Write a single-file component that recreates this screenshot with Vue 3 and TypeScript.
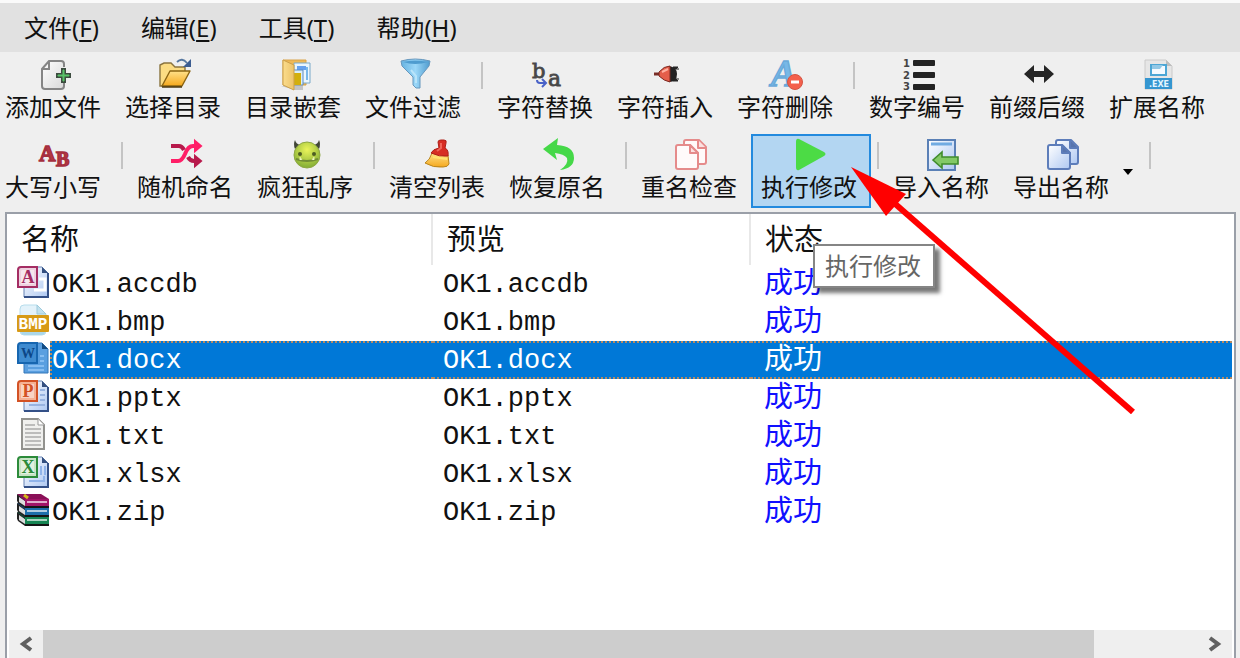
<script setup lang="ts">
import { ref } from 'vue'

interface Tool {
  kind: 'tool'
  icon: string
  label: string
  active?: boolean
  menu?: boolean
}
interface Separator {
  kind: 'sep'
}
interface FileRow {
  name: string
  preview: string
  status: string
  icon: string
}

const menus = [
  { text: '文件', key: 'F' },
  { text: '编辑', key: 'E' },
  { text: '工具', key: 'T' },
  { text: '帮助', key: 'H' },
]

const tool = (icon: string, label: string, extra: Partial<Tool> = {}): Tool => ({ kind: 'tool', icon, label, ...extra })
const sep: Separator = { kind: 'sep' }

const toolbars: (Tool | Separator)[][] = [
  [
    tool('add', '添加文件'),
    tool('open', '选择目录'),
    tool('nested', '目录嵌套'),
    tool('filter', '文件过滤'),
    sep,
    tool('replace', '字符替换'),
    tool('insert', '字符插入'),
    tool('remove', '字符删除'),
    sep,
    tool('number', '数字编号'),
    tool('affix', '前缀后缀'),
    tool('ext', '扩展名称'),
  ],
  [
    tool('letters', '大写小写'),
    sep,
    tool('shuffle', '随机命名'),
    tool('crazy', '疯狂乱序'),
    sep,
    tool('clear', '清空列表'),
    tool('undo', '恢复原名'),
    sep,
    tool('check', '重名检查'),
    tool('run', '执行修改', { active: true }),
    sep,
    tool('import', '导入名称'),
    tool('export', '导出名称', { menu: true }),
    sep,
  ],
]

const files: FileRow[] = [
  ['OK1.accdb', 'accdb'],
  ['OK1.bmp', 'bmp'],
  ['OK1.docx', 'docx'],
  ['OK1.pptx', 'pptx'],
  ['OK1.txt', 'txt'],
  ['OK1.xlsx', 'xlsx'],
  ['OK1.zip', 'zip'],
].map(([name, icon]) => ({ name, preview: name, status: '成功', icon }))

const selected = ref('OK1.docx')

const twoPages = (line: string, fill: string, fold: string) => `
  <g fill="${fill}" stroke="${line}" stroke-width="2" stroke-linejoin="round">
    <path d="M9 6V3Q9 1 11 1H24L31 8V23Q31 25 29 25H23"/>
    <path d="M23 1V9H31" fill="${fold}"/>
    <path d="M3 6H15L23 14V28Q23 30 21 30H3Q1 30 1 28V8Q1 6 3 6Z"/>
    <path d="M15 6V14H23Z" fill="${fold}"/>
  </g>`

const office = (letter: string, line: string, pale: string, extra: string) => `
  <path d="M7 1H25L31 7V31H7Z" fill="url(#paper)" stroke="#6683b5"/>
  <path d="M7 31H31V7" fill="none" stroke="#345087" stroke-width="2"/>
  <path d="M25 1V7H31Z" fill="#35507f"/>
  ${extra}
  <path d="M4 1H20V21H1V4Q1 1 4 1Z" fill="${pale}" stroke="${line}" stroke-width="2"/>
  <path d="M5 4H17V18H4V5Z" fill="#fff" fill-opacity=".45"/>
  <text x="11" y="17" text-anchor="middle" font-family="Liberation Serif, serif" font-weight="700" font-size="18" fill="${line}">${letter}</text>`

const book = (y: number, color: string, dark: string) => `
  <g transform="translate(0 ${y})">
    <path d="M0 0L8 5V14L1 9Q-1 5 0 0Z" fill="#222"/>
    <path d="M2 3L8 7V12L2 8Z" fill="#ddd"/>
    <path d="M0 0L24 0L32 5V7H8Z" fill="${dark}"/>
    <path d="M8 5H32V13H8Z" fill="${color}"/>
    <path d="M10 8H30" stroke="#fff" stroke-opacity=".65" stroke-width="2"/>
    <path d="M8 13H32" stroke="#151515" stroke-width="2"/>
  </g>`

const icons: Record<string, string> = {
  add: `
    <path d="M10 2H22Q25 2 25 5V27Q25 30 22 30H6Q3 30 3 27V10Z" fill="url(#sheet)"/>
    <path d="M25 8V5Q25 2 22 2H10L3 10V27Q3 30 6 30H22Q25 30 25 27V24M10 2V10H3" fill="none" stroke="#858585" stroke-width="2"/>
    <path d="M22 9H27V14H32V19H27V24H22V19H17V14H22Z" fill="#3c4c3f"/>
    <path d="M24 11H25V16H30V17H25V22H24V17H19V16H24Z" fill="#59c268" stroke="#59c268"/>`,
  open: `
    <path d="M1 27V6L5 4H12L16 8H26V14L22 27Z" fill="#fbdc83" stroke="#8a7440" stroke-width="1.4"/>
    <path d="M11 12H31L23 27H3Z" fill="url(#gold)" stroke="#8b6411" stroke-width="1.4" stroke-linejoin="round"/>
    <path d="M3 28H23" stroke="#4b3912" stroke-width="1.5"/>
    <path d="M18 3Q23-2 28 4" fill="none" stroke="#56779f" stroke-width="1.8"/>
    <path d="M32 0V8H24Z" fill="#3c5d91"/>`,
  nested: `
    <path d="M2 27L16 31H24V27Z" fill="#999" opacity=".5"/>
    <path d="M4 1H27V26H4Z" fill="#eeb956" stroke="#d8a348"/>
    <path d="M15 4H31V24H15Z" fill="#eaf6fd" stroke="#7ba9c9"/>
    <path d="M18 7H27V11H18Z" fill="#65a1ee"/>
    <path d="M14 11H24V26H14Z" fill="#d9eef9" stroke="#5a8bc4"/>
    <path d="M15 14H22V26H15Z" fill="#d2af0d"/>
    <path d="M28 8V21" stroke="#78b8ea" stroke-width="2"/>
    <path d="M4 1L15 6V31L4 26Z" fill="url(#folder)" stroke="#cda14b"/>`,
  filter: `
    <path d="M2 2Q16-2 31 2L30 7L21 18V29L17 29L14 26V18L3 7Z" fill="url(#blue)" stroke="#6797bd"/>
    <path d="M4 3Q16 7 29 3Q16 0 4 3Z" fill="#4f9ccf"/>
    <path d="M12 11L17 17V24" fill="none" stroke="#b9e4fa" stroke-width="2"/>`,
  replace: `
    <g font-family="DejaVu Serif, serif" fill="#484848" stroke="#484848" stroke-width=".8">
      <text x="1" y="19" font-size="21">b</text>
      <text x="17" y="27" font-size="22">a</text>
    </g>
    <path d="M6 21Q6 24 9 24H14M11 20L15 24L11 28" fill="none" stroke="#4962c8" stroke-width="2"/>`,
  insert: `
    <path d="M22 9H27M22 21H27" stroke="#272727" stroke-width="3"/>
    <path d="M18 7Q26 8 26 15Q26 23 18 23Z" fill="#222"/>
    <path d="M3 15H11" stroke="#792e27" stroke-width="3"/>
    <path d="M8 13Q13 7 19 7V23Q13 22 8 17Z" fill="#e45e4b" stroke="#7b2921"/>
    <path d="M11 13L17 10" stroke="#ffb0a0" stroke-width="2"/>
    <path d="M26 10H28M26 20H28" stroke="#888" stroke-width="2"/>`,
  remove: `
    <text x="0" y="27" font-family="Liberation Serif, serif" font-style="italic" font-weight="700" font-size="38" fill="#77b8e7" stroke="#6aaada" stroke-width="1.4">A</text>
    <circle cx="24" cy="23" r="7.5" fill="#f4604c" stroke="#d45443"/>
    <path d="M20 23H28" stroke="#fff" stroke-width="3"/>`,
  number: `
    <g fill="#222"><rect x="10" y="1" width="22" height="6" rx="1"/><rect x="10" y="13" width="22" height="6" rx="1"/><rect x="10" y="25" width="22" height="6" rx="1"/></g>
    <g font-family="DejaVu Sans, sans-serif" font-weight="700" font-size="10" fill="#444"><text x="0" y="8">1</text><text x="0" y="20">2</text><text x="0" y="31">3</text></g>`,
  affix: `<path d="M1 15L11 6V12H21V6L31 15L21 24V18H11V24Z" fill="#252525"/>`,
  ext: `
    <path d="M2 1H23L29 7V30H2Z" fill="#e6e6e6" stroke="#cacaca"/>
    <path d="M23 1V7H29Z" fill="#bdbdbd"/>
    <path d="M8 6H23V16H8Z" fill="#f4faff" stroke="#4ca6d5" stroke-width="2"/>
    <path d="M9 6H20L17 10H9Z" fill="#92c8e6"/>
    <path d="M2 19H29V30H2Z" fill="#3596d0"/>
    <text x="16" y="28" text-anchor="middle" font-family="DejaVu Sans, sans-serif" font-weight="700" font-size="8" fill="#e3f5ff">.EXE</text>`,
  letters: `
    <g font-family="Liberation Serif, serif" font-weight="700" fill="#b33744" stroke="#a52f3e" stroke-width="1.4"><text x="0" y="22" font-size="23">A</text><text x="17" y="27" font-size="20">B</text></g>`,
  shuffle: `
    <g fill="none" stroke-width="4">
      <path d="M0 7H8Q11 7 13 11M17 18Q19 22 23 22H25" stroke="#b7194b"/>
      <path d="M24 17L30 22L24 27Z" fill="#b7194b" stroke="#b7194b" stroke-width="2"/>
      <path d="M0 22H7Q11 22 14 15Q17 7 22 7H25" stroke="#ff1e67"/>
      <path d="M24 2L30 7L24 12Z" fill="#ff1e67" stroke="#ff1e67" stroke-width="2"/>
    </g>`,
  crazy: `
    <path d="M4 10Q2 5 4 1Q5 5 9 6ZM28 10Q30 5 28 1Q27 5 23 6Z" fill="#414637"/>
    <circle cx="16" cy="16" r="13" fill="url(#green)" stroke="#8ea743"/>
    <path d="M5 20Q16 24 27 20" fill="none" stroke="#718c35" stroke-width="2"/>
    <path d="M9 21V18L11 21M23 21V18L21 21" fill="#fff" stroke="#deed9b"/>
    <circle cx="9" cy="15" r="2" fill="#4d5e23"/><circle cx="23" cy="15" r="2" fill="#4d5e23"/>`,
  clear: `
    <path d="M9 14L25 16L26 25Q25 28 20 28Q10 29 2 24Q7 21 9 14Z" fill="url(#gold)" stroke="#b9851d"/>
    <path d="M10 18L24 20" fill="none" stroke="#ffe36f" stroke-width="2"/>
    <path d="M16 9L15 3Q15 1 18 1H21Q24 1 23 4L22 9Q26 11 25 17Q16 18 8 14Q10 10 16 9Z" fill="#d72d24" stroke="#ae2019"/>
    <path d="M18 4V9L14 12" fill="none" stroke="#f0665a" stroke-width="2"/>`,
  undo: `<path d="M0 10L15-1L14 6Q31 7 31 19Q31 29 17 31Q26 25 24 19Q21 15 12 14L14 21Z" fill="#45d848"/>`,
  check: twoPages('#e58b8b', '#fffafa', '#fbe1e1'),
  run: `<path d="M1 3Q1-1 4 0L29 13Q32 15 29 17L4 31Q1 32 1 28Z" fill="#4cdb45"/>`,
  import: `
    <path d="M1 1H28V31H1Z" fill="url(#paper)" stroke="#5a80b6" stroke-width="2"/>
    <path d="M4 5H25" stroke="#70abe2" stroke-width="3"/>
    <path d="M6 21L15 13V18H31V25H15V29Z" fill="#83c967" stroke="#408c2d" stroke-width="1.6"/>`,
  export: twoPages('#5d7dba', 'url(#paper)', '#5875ae'),
  accdb: office('A', '#a42d63', '#eed1df', '<path d="M17 24H28V13H22" fill="none" stroke="#fff" stroke-width="3"/>'),
  docx: `
    <path d="M7 1H25L31 7V31H7Z" fill="#5a9fe0" stroke="#3377b9"/>
    <path d="M25 1V7H31Z" fill="#124b83"/>
    <path d="M11 24H27M11 28H27M23 14H27M23 19H27" stroke="#86bdf1" stroke-width="2"/>
    <path d="M4 1H20V21H1V4Q1 1 4 1Z" fill="#3e8bd0" stroke="#1766b0" stroke-width="2"/>
    <text x="11" y="16" text-anchor="middle" font-family="Liberation Serif, serif" font-weight="700" font-size="14" fill="#0c4687">W</text>`,
  pptx: office('P', '#d35225', '#f5b194', '<path d="M12 25H28M23 10H28M23 15H28M23 20H28" stroke="#98b3e0" stroke-width="2"/>'),
  xlsx: office('X', '#2c8b3a', '#c7e3c5', '<path d="M12 25H27V20M24 10V19M28 10V19" fill="none" stroke="#91b4e9" stroke-width="2"/>'),
  bmp: `
    <path d="M3 12V5Q3 1 7 1H20L29 10V27Q29 31 25 31H7Q3 31 3 27Z" fill="#e3f2fa" stroke="#b7ddec"/>
    <path d="M20 1V10H29Z" fill="#c2e1ef" stroke="#9ecbdc"/>
    <path d="M4 25H28V28Q28 31 24 31H8Q4 31 4 28Z" fill="#abd7ea"/>
    <rect x="0" y="11" width="32" height="17" rx="1" fill="#d79a16"/>
    <text x="16" y="25" text-anchor="middle" font-family="Liberation Mono, monospace" font-weight="700" font-size="16" fill="#fff">BMP</text>`,
  txt: `
    <path d="M5 1H21L27 7V31H5Z" fill="#f0f0ee" stroke="#92928e" stroke-width="2"/>
    <path d="M21 1V7H27" fill="#fff" stroke="#999"/>
    <path d="M8 7H18M8 11H24M8 15H24M8 19H24M8 23H24M8 27H24" stroke="#aaa" stroke-width="1.5"/>`,
  zip: book(18, '#168553', '#0d4735') + book(9, '#1d6eaa', '#173e65') + book(0, '#a11467', '#8a1058') + '<path d="M7 1L11 4" fill="none" stroke="#d4b719" stroke-width="3"/>',
}
</script>

<template>
  <main class="window">
    <svg class="defs" aria-hidden="true">
      <defs>
        <linearGradient id="sheet" x2="1" y2="1"><stop stop-color="#fff" /><stop offset="1" stop-color="#d8d8d8" /></linearGradient>
        <linearGradient id="paper" x2="1" y2="1"><stop stop-color="#fff" /><stop offset="1" stop-color="#aec8f2" /></linearGradient>
        <linearGradient id="gold" x2="0" y2="1"><stop stop-color="#ffe18a" /><stop offset="1" stop-color="#f5a81c" /></linearGradient>
        <linearGradient id="folder"><stop stop-color="#fbdc8c" /><stop offset="1" stop-color="#ecc36a" /></linearGradient>
        <linearGradient id="blue"><stop stop-color="#67b3e1" /><stop offset=".5" stop-color="#9bd7f8" /><stop offset="1" stop-color="#4f9bce" /></linearGradient>
        <radialGradient id="green" cx=".5" cy=".3" r=".7"><stop stop-color="#eaf45a" /><stop offset="1" stop-color="#82ad35" /></radialGradient>
      </defs>
    </svg>

    <nav class="menubar">
      <button v-for="m in menus" :key="m.key" type="button">{{ m.text }}(<u>{{ m.key }}</u>)</button>
    </nav>

    <div class="toolbars">
      <div v-for="(bar, i) in toolbars" :key="i" class="toolbar" role="toolbar">
        <template v-for="(item, j) in bar" :key="j">
          <span v-if="item.kind === 'sep'" class="separator"></span>
          <div v-else class="slot">
            <button type="button" class="tool" :class="{ active: item.active }">
              <svg viewBox="0 0 32 32" aria-hidden="true" v-html="icons[item.icon]"></svg>
              <span>{{ item.label }}</span>
            </button>
            <button v-if="item.menu" type="button" class="more" aria-label="更多">
              <svg viewBox="0 0 10 6" aria-hidden="true"><path d="M0 0H10L5 6Z" /></svg>
            </button>
            <template v-if="item.active">
              <div class="tooltip" role="tooltip">{{ item.label }}</div>
              <svg class="pointer" viewBox="0 0 284 247" aria-hidden="true">
                <path d="M0 0L55 27L35 49Z" />
                <path d="M42 35L282 245" class="shaft" />
              </svg>
            </template>
          </div>
        </template>
      </div>
    </div>

    <section class="list">
      <table>
        <colgroup><col class="name-col" /><col class="preview-col" /><col /></colgroup>
        <thead>
          <tr><th scope="col">名称</th><th scope="col">预览</th><th scope="col">状态</th></tr>
        </thead>
        <tbody>
          <tr v-for="f in files" :key="f.name" :class="{ selected: f.name === selected }" @click="selected = f.name">
            <td>
              <div class="file">
                <svg viewBox="0 0 32 32" aria-hidden="true" v-html="icons[f.icon]"></svg>
                <span>{{ f.name }}</span>
              </div>
            </td>
            <td>{{ f.preview }}</td>
            <td class="status">{{ f.status }}</td>
          </tr>
        </tbody>
      </table>
      <div class="scrollbar">
        <button type="button" aria-label="向左滚动"><svg viewBox="0 0 14 16"><path d="M12 2L4 8L12 14" /></svg></button>
        <div class="track"><div class="thumb"></div></div>
        <button type="button" aria-label="向右滚动"><svg viewBox="0 0 14 16"><path d="M2 2L10 8L2 14" /></svg></button>
      </div>
    </section>
  </main>
</template>

<style>
body {
  margin: 0;
}
</style>

<style scoped>
.window {
  box-sizing: border-box;
  display: flex;
  flex-direction: column;
  height: 100vh;
  overflow: hidden;
  background: #efefef;
  color: #111;
  font: 24px/32px "Noto Sans", "Noto Sans CJK SC", sans-serif;
}
.defs {
  position: absolute;
  width: 0;
  height: 0;
}
button {
  margin: 0;
  padding: 0;
  border: 0;
  background: none;
  color: inherit;
  font: inherit;
}
.menubar {
  display: flex;
  flex: none;
  gap: 2px;
  height: 49px;
  padding-left: 4px;
  border-top: 3px solid #fafafa;
  background: #e1e1e1;
}
.menubar button {
  padding: 0 20px;
}
u {
  text-decoration-thickness: 2px;
  text-underline-offset: 3px;
}
.toolbars {
  display: flex;
  flex: none;
  flex-direction: column;
  gap: 6px;
  margin-left: -5px;
  padding: 2px 0 4px;
}
.toolbar {
  display: flex;
}
.slot {
  position: relative;
  display: flex;
}
.tool {
  box-sizing: border-box;
  display: flex;
  flex-direction: column;
  align-items: center;
  width: 120px;
  height: 74px;
  padding-top: 3px;
  border: 2px solid transparent;
  white-space: nowrap;
}
.tool svg {
  flex: none;
  width: 32px;
  height: 32px;
  overflow: visible;
}
.tool span {
  padding-right: 4px;
}
.tool.active {
  border-color: #238ade;
  background: #b3d6f2;
}
.separator {
  width: 2px;
  height: 27px;
  margin: 8px 4px 0 6px;
  background: #c4c4c4;
}
.more {
  width: 20px;
  padding-top: 2px;
  text-align: left;
}
.more svg {
  display: block;
  width: 10px;
  height: 6px;
}
.tooltip {
  position: absolute;
  z-index: 2;
  top: 110px;
  left: 62px;
  padding: 4px 12px 4px 10px;
  border: 2px solid #858585;
  background: #fff;
  box-shadow: 5px 5px 4px #0008;
  color: #666;
  white-space: nowrap;
}
.pointer {
  position: absolute;
  z-index: 3;
  top: 33px;
  left: 100px;
  width: 284px;
  height: 247px;
  fill: #f00;
  pointer-events: none;
}
.shaft {
  stroke: #f00;
  stroke-width: 6px;
}
.list {
  display: flex;
  flex: 1;
  flex-direction: column;
  min-height: 0;
  margin: 0 4px 0 5px;
  padding-right: 2px;
  border: solid #9a9fa8;
  border-width: 2px 2px 0;
  background: #fff;
}
table {
  width: 100%;
  border-collapse: separate;
  border-spacing: 0;
  table-layout: fixed;
  font: 27px/38px "Liberation Mono", "Noto Sans CJK SC", monospace;
}
.name-col {
  width: 426px;
}
.preview-col {
  width: 318px;
}
th {
  box-sizing: border-box;
  height: 51px;
  padding: 6px 14px 0;
  border-right: 2px solid #e8e8e8;
  font-size: 29px;
  font-weight: 400;
  text-align: left;
}
th:last-child {
  border-right: 0;
}
td {
  box-sizing: border-box;
  height: 38px;
  padding: 2px 0 0 10px;
  line-height: 32px;
  border: 0 dotted transparent;
  border-width: 2px 0;
}
td.status {
  padding: 4px 0 0 13px;
  color: #1010ff;
  font-size: 29px;
  line-height: 30px;
}
td:first-child {
  padding-top: 0;
  border-width: 0;
}
.file {
  display: flex;
  gap: 1px;
}
.file svg {
  flex: none;
  width: 32px;
  height: 32px;
  margin-top: 1px;
}
.file span {
  box-sizing: border-box;
  flex: 1;
  height: 38px;
  padding-top: 2px;
  border: 2px dotted transparent;
  border-right: 0;
}
.selected td:not(:first-child),
.selected .file span {
  border-color: #b58a62;
  background: #0078d7;
  color: #fff;
}
.scrollbar {
  display: flex;
  flex: none;
  height: 28px;
  margin: auto 0 0 2px;
  background: #efefef;
}
.scrollbar button {
  display: flex;
  align-items: center;
  justify-content: center;
  width: 34px;
}
.scrollbar svg {
  width: 14px;
  height: 16px;
  fill: none;
  stroke: #606060;
  stroke-width: 4px;
}
.track {
  flex: 1;
}
.thumb {
  width: 91%;
  height: 100%;
  background: #cdcdcd;
}
</style>
